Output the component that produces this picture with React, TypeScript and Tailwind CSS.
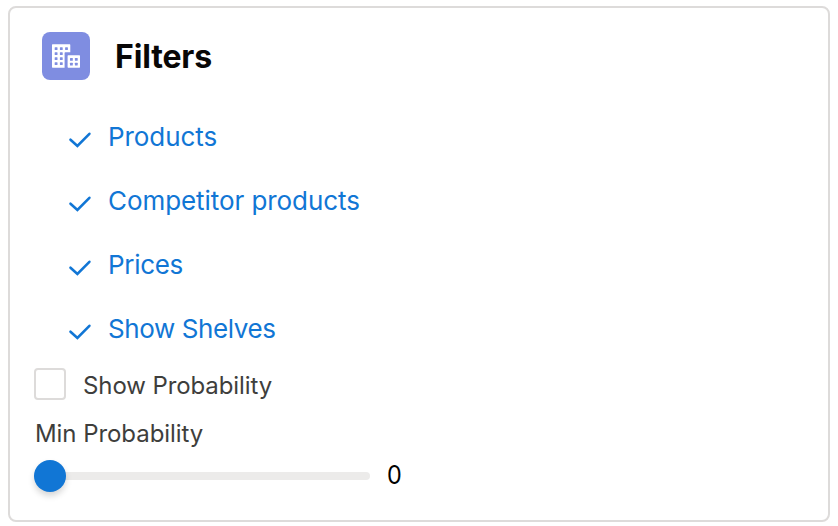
const filters = [
  { name: 'Products', tracking: 'tracking-[-0.08px]' },
  { name: 'Competitor products', tracking: 'tracking-[-0.07px]' },
  { name: 'Prices', tracking: 'tracking-[-0.3px]' },
  { name: 'Show Shelves', tracking: 'tracking-[-0.4px]' },
];

function BuildingIcon() {
  const tower = [48.7, 53.7, 58.7, 63.7].flatMap((y, row) =>
    (row === 0 ? [56.1, 61.3, 66.5] : [56.1, 61.3]).map((x) => [x, y])
  );
  const annex = [59.4, 64.2].flatMap((y) => [71.4, 76.3].map((x) => [x, y]));
  return (
    <svg viewBox="42 32 48 48" className="size-12" aria-hidden="true">
      <path fill="#fff" d="M52.6 44.3h17.1q.6 0 .6.6v7.4h-5q-.7 0-.7.7v14.7h-12q-.6 0-.6-.6V44.9q0-.6.6-.6Z" />
      <rect x="67.6" y="55.3" width="12.4" height="12.4" rx=".6" fill="#fff" />
      {[...tower, ...annex].map(([x, y]) => (
        <rect key={`${x}-${y}`} x={x - 1.4} y={y - 1.4} width="2.8" height="2.8" rx=".5" fill="#7f8de1" />
      ))}
    </svg>
  );
}

function CheckIcon() {
  return (
    <svg viewBox="0 0 24 24" className="mt-1 size-6 shrink-0" fill="none" stroke="#1176d5" strokeWidth="2.6" strokeLinecap="round" strokeLinejoin="miter" aria-hidden="true">
      <path d="M2.5 12.7 9.4 19 21.4 6.8" />
    </svg>
  );
}

export default function App() {
  return (
    <div className="h-[526px] w-[838px] bg-white px-2 pt-1.5 font-['Inter',sans-serif]">
      <section className="h-[516px] w-[822px] rounded-lg border-2 border-[#dddbda] pl-6 pt-6">
        <header className="ml-2 flex h-12 items-center gap-[25px]">
          <div className="size-12 overflow-hidden rounded-lg bg-[#7f8de1]">
            <BuildingIcon />
          </div>
          <h1 className="pt-0.5 text-[32px] font-bold leading-12 tracking-[-0.15px] text-[#080707]">Filters</h1>
        </header>
        <ul className="ml-[34px] mt-[25px]">
          {filters.map(({ name, tracking }) => (
            <li key={name} className="flex h-16 items-center gap-4 text-[26px] text-[#1176d5]">
              <CheckIcon />
              <span className={`leading-10 ${tracking}`}>{name}</span>
            </li>
          ))}
        </ul>
        <label className="mt-[7px] flex h-8 items-center gap-[17px] text-2xl text-[#3e3e3c]">
          <span className="size-8 rounded-sm border-2 border-[#dddbda]" />
          <span className="pt-[3px] tracking-[-0.1px]">Show Probability</span>
        </label>
        <p className="ml-px mt-4 text-2xl leading-9 tracking-[-0.06px] text-[#3e3e3c]">Min Probability</p>
        <div className="mt-2 flex h-8 items-center gap-[17px]">
          <div className="flex h-2 w-[336px] items-center rounded-full bg-[#ecebea]">
            <span className="size-8 rounded-full bg-[#1176d5] shadow-[0_4px_6px_rgba(0,0,0,0.16)]" />
          </div>
          <span className="origin-left scale-x-90 pb-[3px] text-[26px] text-black">0</span>
        </div>
      </section>
    </div>
  );
}
